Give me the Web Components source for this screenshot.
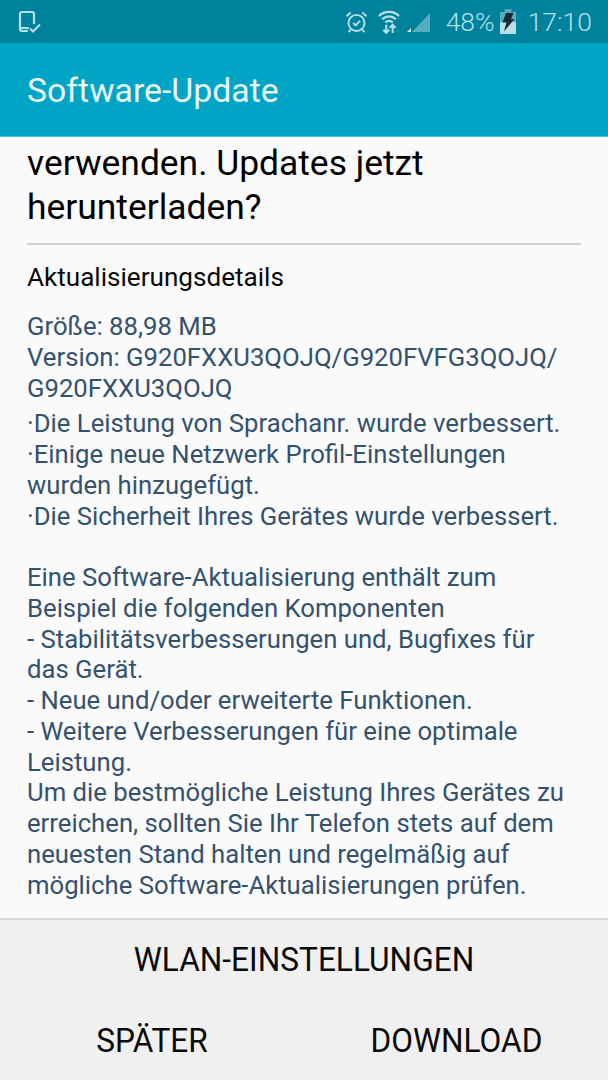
<!DOCTYPE html>
<html lang="de"><head><meta charset="utf-8"><style>
html,body{margin:0;padding:0;background:#fafafa}
body{width:608px;height:1080px;overflow:hidden;font-family:Roboto,sans-serif;display:flex;flex-direction:column}
</style></head><body>
<status-bar></status-bar>
<app-bar>Software-Update</app-bar>
<update-body></update-body>
<action-bar></action-bar>
<script>
function def(name, html){
  customElements.define(name, class extends HTMLElement{
    constructor(){super();this.attachShadow({mode:'open'}).innerHTML=html;}
  });
}
def('status-bar',`<style>
:host{display:flex;align-items:center;height:43px;flex:none;background:#00819c;color:#b5e0e8;font:300 26.500px/46px Roboto,sans-serif;padding:0 16px 0 18px;box-sizing:border-box}
.sp{flex:1}
svg{display:block;flex:none}
.pct{margin-left:16px}
.bat{margin-left:5px}
.time{margin-left:12px}
.wifi{margin-left:10px}
.sig{margin-left:7px}
</style>
<svg width="24" height="24" viewBox="0 0 24 24" fill="none" stroke="#b5e0e8" stroke-width="2.2"><path d="M10 21H4a2 2 0 0 1-2-2V4a2 2 0 0 1 2-2h10a2 2 0 0 1 2 2v10"/><path d="M2 18h9" stroke-width="2"/><path d="M12 19l3 3 7-7" transform="translate(0 -.5)" stroke-width="2"/></svg>
<span class="sp"></span>
<svg width="23" height="24" viewBox="0 0 24 25" fill="none" stroke="#b5e0e8" stroke-width="2"><circle cx="12" cy="13.500" r="8.400"/><path d="M8.500 13.500l2.600 2.600 4.600-4.800"/><path d="M1.500 6.500L6 2.500M22.500 6.500L18 2.500M5.800 20.500l-2 2.600M18.200 20.500l2 2.600"/></svg>
<svg class="wifi" width="22" height="25" viewBox="0 0 24 27" fill="none" stroke="#b5e0e8" stroke-width="2.400"><path d="M1 7.500C7 1.500 17 1.500 23 7.500"/><path d="M4.500 11C9 6.800 15 6.800 19.500 11"/><path d="M8 14.500c2.500-2.200 5.500-2.200 8 0"/><path d="M9 17v9M5.800 22.500L9 26l3.200-3.500M16 26v-9M12.800 20.500L16 17l3.200 3.500" stroke-width="2.200"/></svg>
<svg class="sig" width="23" height="24" viewBox="0 0 23 24"><path d="M5 22L23 3v19z" fill="#56adc0"/><path d="M0 22l4-4v4z" fill="#d5eef2"/></svg>
<span class="pct">48%</span>
<svg class="bat" width="16" height="25" viewBox="0 0 16 25"><path d="M4.500 0h7v3h4.500v22H0V3h4.500z" fill="#56adc0"/><path d="M0 13h16v12H0z" fill="#b5e0e8"/><path d="M6 4h7.500L11 10h3.500L4 22.500 6.500 13.500H2.500z" fill="#1b2a30"/></svg>
<span class="time">17:10</span>`);
def('app-bar',`<style>
:host{display:flex;align-items:center;flex:none;height:94px;box-sizing:border-box;padding:2px 27px 0;background:#00a5c5;color:#e6f6f9;font:33.800px Roboto,sans-serif;border-bottom:1px solid #4cc0d6}
</style><slot></slot>`);
def('update-body',`<style>
:host{display:block;flex:1;overflow:hidden;padding:0 27px;background:#fafafa;font-family:Roboto,sans-serif}
h2{margin:4px 0 0;font-weight:400;font-size:35.400px;line-height:44px;color:#000}
hr{margin:14px 0 0;border:0;height:2px;background:#cfd0d0}
h3{margin:17px 0 0;font-weight:400;font-size:26.100px;line-height:30px;color:#0a0a0a}
.g{color:#34526e;font-size:25.700px;line-height:30.750px}
.a{margin-top:19px}.b{margin-top:5px}
</style>
<h2>verwenden. Updates jetzt<br>herunterladen?</h2>
<hr>
<h3>Aktualisierungsdetails</h3>
<div class="g a">Größe: 88,98 MB<br>Version: G920FXXU3QOJQ/G920FVFG3QOJQ/<br>G920FXXU3QOJQ</div>
<div class="g b">·Die Leistung von Sprachanr. wurde verbessert.<br>·Einige neue Netzwerk Profil-Einstellungen<br>wurden hinzugefügt.<br>·Die Sicherheit Ihres Gerätes wurde verbessert.<br><br>Eine Software-Aktualisierung enthält zum<br>Beispiel die folgenden Komponenten<br>- Stabilitätsverbesserungen und, Bugfixes für<br>das Gerät.<br>- Neue und/oder erweiterte Funktionen.<br>- Weitere Verbesserungen für eine optimale<br>Leistung.<br>Um die bestmögliche Leistung Ihres Gerätes zu<br>erreichen, sollten Sie Ihr Telefon stets auf dem<br>neuesten Stand halten und regelmäßig auf<br>mögliche Software-Aktualisierungen prüfen.</div>`);
def('action-btn',`<style>
:host{display:flex;align-items:center;justify-content:center;flex:1;height:81px;font:34px Roboto,sans-serif;color:#0a0a0a}
span{display:inline-block;transform:scaleX(.93)}
</style><span><slot></slot></span>`);
def('action-bar',`<style>
:host{display:block;flex:none;height:162px;box-sizing:border-box;background:#f0f0f0;border-top:2px solid #d6d8d8;padding-top:0}
.r{display:flex;margin-top:-2px}
.r + .r{margin-top:0}
</style><div class="r"><action-btn>WLAN-EINSTELLUNGEN</action-btn></div><div class="r"><action-btn>SPÄTER</action-btn><action-btn>DOWNLOAD</action-btn></div>`);
</script>
</body></html>
